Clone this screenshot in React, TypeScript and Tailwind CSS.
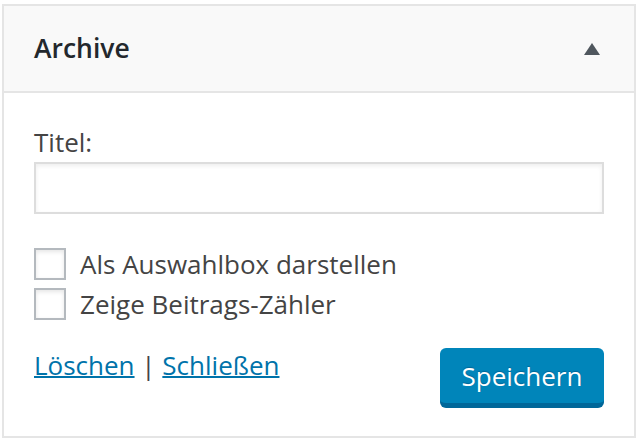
import React from "react";

export default function App() {
  return (
    <div className="w-[640px] h-[442px] bg-white pt-[4px] pl-[2px]" style={{ fontFamily: '"Open Sans", "Noto Sans", sans-serif' }}>
      <div className="w-[634px] border-2 border-[#e5e5e5] bg-white">
        <div className="h-[87px] bg-[#f9f9f9] border-b-2 border-[#e5e5e5] flex items-center justify-between pl-[30px] pr-[34px]">
          <h3 className="text-[26.5px] font-semibold text-[#23282d] leading-none">Archive</h3>
          <svg width="16" height="12" viewBox="0 0 16 12" className="block">
            <polygon points="8,0 16,12 0,12" fill="#50575e" />
          </svg>
        </div>
        <div className="pt-[30px] px-[30px] pb-[30px] text-[26px] leading-[39px] text-[#444]">
          <label className="block">Titel:</label>
          <div className="h-[52px] w-full border-2 border-[#dddddd] bg-white shadow-[inset_0_2px_4px_rgba(0,0,0,0.07)]" />
          <div className="mt-[34px] flex flex-col gap-[8px]">
            <div className="flex items-center h-[32px]">
              <span className="w-[32px] h-[32px] border-2 border-[#b4b9be] bg-white shadow-[inset_0_2px_4px_rgba(0,0,0,0.1)] shrink-0" />
              <span className="ml-[14px]">Als Auswahlbox darstellen</span>
            </div>
            <div className="flex items-center h-[32px]">
              <span className="w-[32px] h-[32px] border-2 border-[#b4b9be] bg-white shadow-[inset_0_2px_4px_rgba(0,0,0,0.1)] shrink-0" />
              <span className="ml-[14px]">Zeige Beitrags-Zähler</span>
            </div>
          </div>
          <div className="mt-[26px] flex items-start justify-between">
            <div>
              <a href="#" className="text-[#0073aa] underline decoration-2">Löschen</a>
              <span className="text-[#444]"> | </span>
              <a href="#" className="text-[#0073aa] underline decoration-2">Schließen</a>
            </div>
            <button className="mt-[2px] h-[58px] w-[164px] rounded-[6px] bg-[#0085ba] text-white text-[26px] leading-none border-b-[3px] border-[#006799] shadow-[0_2px_0_#006799]" style={{ textShadow: "0 -1px 1px #006799" }}>
              Speichern
            </button>
          </div>
        </div>
      </div>
    </div>
  );
}
